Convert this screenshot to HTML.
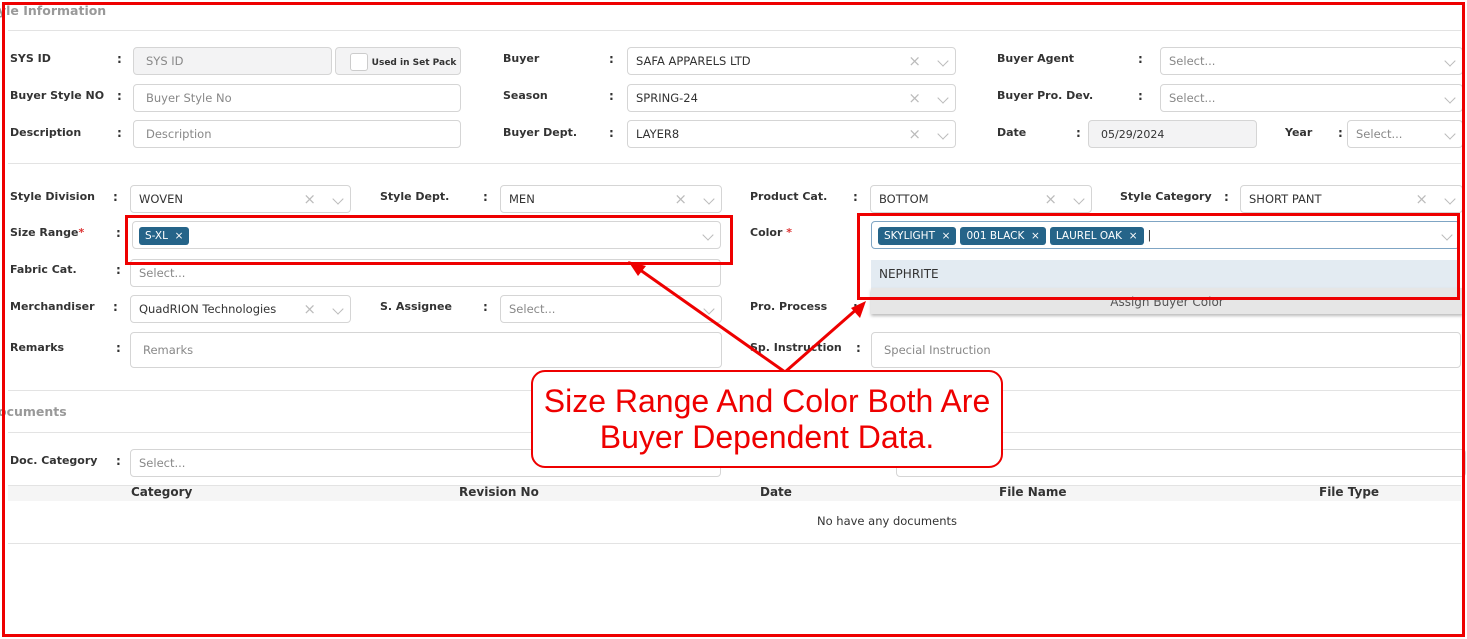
<!DOCTYPE html><html><head><style>
body{margin:0;width:1467px;height:639px;background:#fff;font-family:"DejaVu Sans","Liberation Sans",sans-serif;position:relative;overflow:hidden;font-size:12px;color:#333}
.a{position:absolute}
.l{position:absolute;font-weight:bold;font-size:11px;color:#333}
.c{position:absolute;font-weight:bold}
.i{position:absolute;border:1px solid #d5d5d5;border-radius:4px;height:28px;box-sizing:border-box;background:#fff;padding:0 12px;line-height:27px;color:#888;font-size:11.5px;white-space:nowrap;overflow:hidden}
.v{color:#333}
.x{position:absolute;right:34px;top:0;color:#bbb;font-size:15px}
.d{position:absolute;right:8px;top:9px;width:7px;height:7px;border-right:1.5px solid #bbb;border-bottom:1.5px solid #bbb;transform:rotate(45deg)}
.hr{position:absolute;left:8px;right:6px;height:1px;background:#e3e3e3}
.tag{display:inline-block;background:#256489;color:#fff;border-radius:3px;padding:0 6px;line-height:18px;font-size:10.5px;margin-right:4px}
.th{position:absolute;top:485px;font-weight:bold;font-size:12px}
</style></head><body>
<div class="a" style="left:-2px;top:3px;color:#999;font-weight:bold;font-size:12.5px">yle Information</div>
<div class="hr" style="top:30px"></div>
<div class="hr" style="top:163px"></div>
<div class="hr" style="top:390px"></div>
<div class="hr" style="top:432px"></div>

<div class="l" style="left:10px;top:52px">SYS ID</div><div class="c" style="left:117px;top:52px">:</div>
<div class="i" style="left:133px;top:47px;width:199px;background:#f3f3f4">SYS ID</div>
<div class="i" style="left:335px;top:47px;width:126px;background:#f3f3f4;padding-left:14px"><span style="display:inline-block;width:16px;height:16px;border:1px solid #ccc;border-radius:3px;background:#fff;vertical-align:middle"></span> <b style="font-size:9px;color:#333">Used in Set Pack</b></div>
<div class="l" style="left:10px;top:89px">Buyer Style NO</div><div class="c" style="left:117px;top:89px">:</div>
<div class="i" style="left:133px;top:84px;width:328px">Buyer Style No</div>
<div class="l" style="left:10px;top:126px">Description</div><div class="c" style="left:117px;top:126px">:</div>
<div class="i" style="left:133px;top:120px;width:328px">Description</div>

<div class="l" style="left:503px;top:52px">Buyer</div><div class="c" style="left:609px;top:52px">:</div>
<div class="i v" style="left:627px;top:47px;width:329px;padding-left:8px">SAFA APPARELS LTD<span class="x">×</span><span class="d"></span></div>
<div class="l" style="left:503px;top:89px">Season</div><div class="c" style="left:609px;top:89px">:</div>
<div class="i v" style="left:627px;top:84px;width:329px;padding-left:8px">SPRING-24<span class="x">×</span><span class="d"></span></div>
<div class="l" style="left:503px;top:126px">Buyer Dept.</div><div class="c" style="left:609px;top:126px">:</div>
<div class="i v" style="left:627px;top:120px;width:329px;padding-left:8px">LAYER8<span class="x">×</span><span class="d"></span></div>

<div class="l" style="left:997px;top:52px">Buyer Agent</div><div class="c" style="left:1138px;top:52px">:</div>
<div class="i" style="left:1160px;top:47px;width:303px;padding-left:8px">Select...<span class="d"></span></div>
<div class="l" style="left:997px;top:89px">Buyer Pro. Dev.</div><div class="c" style="left:1138px;top:89px">:</div>
<div class="i" style="left:1160px;top:84px;width:303px;padding-left:8px">Select...<span class="d"></span></div>
<div class="l" style="left:997px;top:126px">Date</div><div class="c" style="left:1076px;top:126px">:</div>
<div class="i v" style="left:1088px;top:120px;width:169px;background:#f3f3f4;font-size:11px">05/29/2024</div>
<div class="l" style="left:1285px;top:126px">Year</div><div class="c" style="left:1338px;top:126px">:</div>
<div class="i" style="left:1347px;top:120px;width:116px;padding-left:8px">Select...<span class="d"></span></div>

<div class="l" style="left:10px;top:190px">Style Division</div><div class="c" style="left:113px;top:190px">:</div>
<div class="i v" style="left:130px;top:185px;width:221px;padding-left:8px">WOVEN<span class="x">×</span><span class="d"></span></div>
<div class="l" style="left:380px;top:190px">Style Dept.</div><div class="c" style="left:483px;top:190px">:</div>
<div class="i v" style="left:500px;top:185px;width:222px;padding-left:8px">MEN<span class="x">×</span><span class="d"></span></div>
<div class="l" style="left:750px;top:190px">Product Cat.</div><div class="c" style="left:853px;top:190px">:</div>
<div class="i v" style="left:870px;top:185px;width:222px;padding-left:8px">BOTTOM<span class="x">×</span><span class="d"></span></div>
<div class="l" style="left:1120px;top:190px">Style Category</div><div class="c" style="left:1224px;top:190px">:</div>
<div class="i v" style="left:1240px;top:185px;width:223px;padding-left:8px">SHORT PANT<span class="x">×</span><span class="d"></span></div>

<div class="l" style="left:10px;top:226px">Size Range<span style="color:#d33">*</span></div><div class="c" style="left:116px;top:226px">:</div>
<div class="i" style="left:132px;top:221px;width:589px;padding-left:6px"><span class="tag">S-XL &nbsp;×</span><span class="d"></span></div>
<div class="l" style="left:750px;top:226px">Color <span style="color:#d33">*</span></div>
<div class="i" style="left:871px;top:221px;width:589px;padding-left:6px;border-color:#7fa5c4"><span class="tag">SKYLIGHT &nbsp;×</span><span class="tag">001 BLACK &nbsp;×</span><span class="tag">LAUREL OAK &nbsp;×</span><span style="color:#333">|</span><span class="d"></span></div>
<div class="a" style="left:871px;top:260px;width:589px;height:28px;background:#e3ebf2;line-height:28px;padding-left:8px;box-sizing:border-box;color:#333">NEPHRITE</div>
<div class="a" style="left:871px;top:288px;width:592px;height:26px;background:#e6e6e6;text-align:center;line-height:28px;color:#555;box-shadow:0 2px 3px #bbb">Assign Buyer Color</div>

<div class="l" style="left:10px;top:263px">Fabric Cat.</div><div class="c" style="left:116px;top:263px">:</div>
<div class="i" style="left:130px;top:259px;width:591px;padding-left:8px">Select...</div>
<div class="l" style="left:10px;top:300px">Merchandiser</div><div class="c" style="left:113px;top:300px">:</div>
<div class="i v" style="left:130px;top:295px;width:221px;padding-left:8px">QuadRION Technologies<span class="x">×</span><span class="d"></span></div>
<div class="l" style="left:380px;top:300px">S. Assignee</div><div class="c" style="left:483px;top:300px">:</div>
<div class="i" style="left:500px;top:295px;width:222px;padding-left:8px">Select...<span class="d"></span></div>
<div class="l" style="left:750px;top:300px">Pro. Process</div><div class="c" style="left:853px;top:300px">:</div>
<div class="l" style="left:10px;top:341px">Remarks</div><div class="c" style="left:116px;top:341px">:</div>
<div class="i" style="left:130px;top:332px;width:592px;height:36px;line-height:34px">Remarks</div>
<div class="l" style="left:750px;top:341px">Sp. Instruction</div><div class="c" style="left:856px;top:341px">:</div>
<div class="i" style="left:871px;top:332px;width:590px;height:36px;line-height:34px">Special Instruction</div>

<div class="a" style="left:-2px;top:404px;color:#999;font-weight:bold;font-size:12.5px">ocuments</div>
<div class="l" style="left:10px;top:454px">Doc. Category</div><div class="c" style="left:116px;top:454px">:</div>
<div class="i" style="left:130px;top:449px;width:591px;padding-left:8px">Select...</div>
<div class="i" style="left:896px;top:449px;width:570px"></div>
<div class="a" style="left:8px;top:485px;right:6px;height:15px;background:#f5f5f5;border-top:1px solid #e3e3e3"></div>
<div class="th" style="left:131px">Category</div><div class="th" style="left:459px">Revision No</div><div class="th" style="left:760px">Date</div><div class="th" style="left:999px">File Name</div><div class="th" style="left:1319px">File Type</div>
<div class="a" style="left:817px;top:514px;font-size:11.5px">No have any documents</div>
<div class="hr" style="top:543px"></div>

<div class="a" style="left:2px;top:2px;width:1457px;height:629px;border:3px solid #e00"></div>
<div class="a" style="left:125px;top:215px;width:602px;height:44px;border:3px solid #e00"></div>
<div class="a" style="left:857px;top:213px;width:597px;height:81px;border:3px solid #e00"></div>
<svg class="a" style="left:0;top:0" width="1467" height="639">
<line x1="785" y1="372" x2="636" y2="267" stroke="#e00" stroke-width="3"/><polygon points="628,261 646,266 638,276" fill="#e00"/>
<line x1="785" y1="372" x2="858" y2="308" stroke="#e00" stroke-width="3"/><polygon points="866,301 860,318 851,308" fill="#e00"/>
</svg>
<div class="a" style="left:531px;top:370px;width:472px;height:98px;border:2px solid #e00;border-radius:14px;background:#fff;color:#e00;font-family:'Liberation Sans',sans-serif;font-size:32px;text-align:center;line-height:36px;padding-top:11px;box-sizing:border-box">Size Range And Color Both Are<br>Buyer Dependent Data.</div>
</body></html>
